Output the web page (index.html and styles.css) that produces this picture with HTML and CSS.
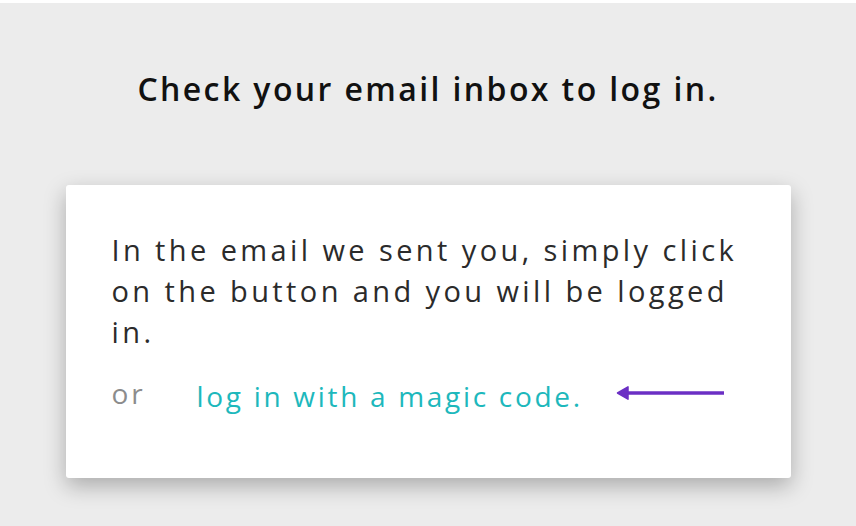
FILE: index.html
```html
<!DOCTYPE html>
<html lang="en">
<head>
<meta charset="utf-8">
<title>Check your email</title>
<link rel="stylesheet" href="styles.css">
</head>
<body>
<main class="page">
  <h1 class="title">Check your email inbox to log in.</h1>
  <section class="card">
    <p class="message">In the email we sent you, simply click on the button and you will be logged in.</p>
    <div class="alt-row">
      <span class="or">or</span>
      <a class="magic-link" href="#">log in with a magic code.</a>
      <svg class="arrow" width="110" height="16" viewBox="0 0 110 16" aria-hidden="true">
        <line x1="11" y1="8" x2="108" y2="8" stroke="#6b2fc4" stroke-width="3.5"/>
        <path d="M1.5 8 L12 1.8 L12 14.2 Z" fill="#6b2fc4" stroke="#6b2fc4" stroke-width="1.5" stroke-linejoin="round"/>
      </svg>
    </div>
  </section>
</main>
</body>
</html>
```
FILE: styles.css
```css
html, body {
  margin: 0;
  padding: 0;
}
body {
  background: #ececec;
  border-top: 3px solid #ffffff;
  height: 523px;
  overflow: hidden;
  font-family: "Open Sans", "Liberation Sans", sans-serif;
}
.page {
  display: flex;
  flex-direction: column;
  align-items: center;
}
.title {
  margin: 66px 0 0;
  font-family: "Open Sans", "Liberation Sans", sans-serif;
  font-weight: 600;
  font-size: 32px;
  line-height: 40px;
  letter-spacing: 2.4px;
  color: #111111;
}
.card {
  margin-top: 76px;
  width: 725px;
  height: 293px;
  box-sizing: border-box;
  background: #ffffff;
  border-radius: 3px;
  box-shadow: 0 8px 22px rgba(0, 0, 0, 0.28);
  padding: 44px 46px 0 46px;
}
.message {
  margin: 0;
  width: 634px;
  font-size: 29px;
  line-height: 41px;
  color: #2b2b2b;
  letter-spacing: 3.4px;
}
.alt-row {
  display: flex;
  align-items: flex-start;
  margin-top: 21px;
  line-height: 40px;
}
.or {
  font-size: 28px;
  letter-spacing: 3px;
  color: #8c8c8c;
  width: 85px;
}
.magic-link {
  font-size: 28px;
  font-weight: 500;
  letter-spacing: 2.7px;
  color: #1db8bc;
  text-decoration: none;
  margin-top: 3px;
}
.arrow {
  margin-left: 33px;
  margin-top: 12px;
}
```
